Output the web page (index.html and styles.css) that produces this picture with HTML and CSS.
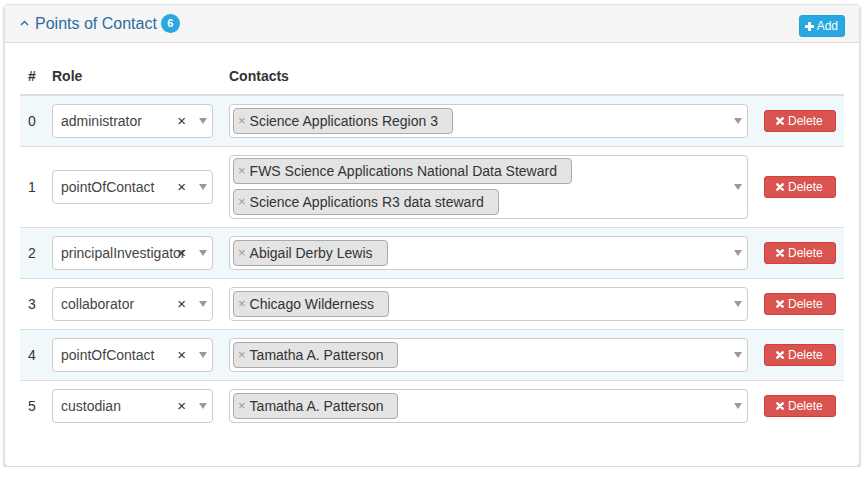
FILE: index.html
```html
<!DOCTYPE html>
<html>
<head>
<meta charset="utf-8">
<title>Points of Contact</title>
<link rel="stylesheet" href="styles.css">
</head>
<body>
<div class="panel">
  <div class="panel-heading">
    <div class="panel-title">
      <svg class="chev" width="9" height="6" viewBox="0 0 9 6"><polyline points="1,5 4.5,1.5 8,5" /></svg>
      <span class="title-text">Points of Contact</span>
      <span class="badge">6</span>
    </div>
    <button class="btn btn-add" type="button">
      <svg class="ico" width="9" height="9" viewBox="0 0 9 9"><rect x="3" y="0" width="3" height="9" rx="0.6"/><rect x="0" y="3" width="9" height="3" rx="0.6"/></svg>Add
    </button>
  </div>
  <div class="panel-body">
    <table class="poc-table">
      <colgroup>
        <col class="c-num"><col class="c-role"><col class="c-contacts"><col class="c-act">
      </colgroup>
      <thead>
        <tr><th>#</th><th>Role</th><th>Contacts</th><th></th></tr>
      </thead>
      <tbody>
        <tr>
          <td>0</td>
          <td><div class="sel"><span class="sel-text">administrator</span><span class="sel-clear">×</span><span class="caret"></span></div></td>
          <td><div class="multi"><div class="tags"><span class="tag"><span class="tag-x">×</span>Science Applications Region 3</span></div><span class="caret"></span></div></td>
          <td><button class="btn btn-del" type="button"><svg class="ico" width="8" height="8" viewBox="0 0 8 8"><path d="M1.3 1.3 L6.7 6.7 M6.7 1.3 L1.3 6.7"/></svg>Delete</button></td>
        </tr>
        <tr>
          <td>1</td>
          <td><div class="sel"><span class="sel-text">pointOfContact</span><span class="sel-clear">×</span><span class="caret"></span></div></td>
          <td><div class="multi"><div class="tags"><span class="tag"><span class="tag-x">×</span>FWS Science Applications National Data Steward</span><span class="tag"><span class="tag-x">×</span>Science Applications R3 data steward</span></div><span class="caret"></span></div></td>
          <td><button class="btn btn-del" type="button"><svg class="ico" width="8" height="8" viewBox="0 0 8 8"><path d="M1.3 1.3 L6.7 6.7 M6.7 1.3 L1.3 6.7"/></svg>Delete</button></td>
        </tr>
        <tr>
          <td>2</td>
          <td><div class="sel"><span class="sel-text">principalInvestigator</span><span class="sel-clear">×</span><span class="caret"></span></div></td>
          <td><div class="multi"><div class="tags"><span class="tag"><span class="tag-x">×</span>Abigail Derby Lewis</span></div><span class="caret"></span></div></td>
          <td><button class="btn btn-del" type="button"><svg class="ico" width="8" height="8" viewBox="0 0 8 8"><path d="M1.3 1.3 L6.7 6.7 M6.7 1.3 L1.3 6.7"/></svg>Delete</button></td>
        </tr>
        <tr>
          <td>3</td>
          <td><div class="sel"><span class="sel-text">collaborator</span><span class="sel-clear">×</span><span class="caret"></span></div></td>
          <td><div class="multi"><div class="tags"><span class="tag"><span class="tag-x">×</span>Chicago Wilderness</span></div><span class="caret"></span></div></td>
          <td><button class="btn btn-del" type="button"><svg class="ico" width="8" height="8" viewBox="0 0 8 8"><path d="M1.3 1.3 L6.7 6.7 M6.7 1.3 L1.3 6.7"/></svg>Delete</button></td>
        </tr>
        <tr>
          <td>4</td>
          <td><div class="sel"><span class="sel-text">pointOfContact</span><span class="sel-clear">×</span><span class="caret"></span></div></td>
          <td><div class="multi"><div class="tags"><span class="tag"><span class="tag-x">×</span>Tamatha A. Patterson</span></div><span class="caret"></span></div></td>
          <td><button class="btn btn-del" type="button"><svg class="ico" width="8" height="8" viewBox="0 0 8 8"><path d="M1.3 1.3 L6.7 6.7 M6.7 1.3 L1.3 6.7"/></svg>Delete</button></td>
        </tr>
        <tr>
          <td>5</td>
          <td><div class="sel"><span class="sel-text">custodian</span><span class="sel-clear">×</span><span class="caret"></span></div></td>
          <td><div class="multi"><div class="tags"><span class="tag"><span class="tag-x">×</span>Tamatha A. Patterson</span></div><span class="caret"></span></div></td>
          <td><button class="btn btn-del" type="button"><svg class="ico" width="8" height="8" viewBox="0 0 8 8"><path d="M1.3 1.3 L6.7 6.7 M6.7 1.3 L1.3 6.7"/></svg>Delete</button></td>
        </tr>
      </tbody>
    </table>
  </div>
</div>
</body>
</html>
```

FILE: styles.css
```css
* { box-sizing: border-box; }

html, body { background: #fff; }

body {
  margin: 0;
  padding: 4px 5px 0 4px;
  font-family: "Liberation Sans", Arial, sans-serif;
  font-size: 14px;
  line-height: 20px;
  color: #333;
}

.panel {
  border: 1px solid #ddd;
  border-radius: 4px;
  background: #fff;
  box-shadow: 0 2px 3px rgba(0, 0, 0, 0.25);
}

.panel-heading {
  height: 38px;
  padding: 0 14px 0 15px;
  background: #f5f5f5;
  border-bottom: 1px solid #ddd;
  border-radius: 3px 3px 0 0;
  display: flex;
  justify-content: space-between;
  align-items: flex-start;
}

.panel-title {
  display: flex;
  align-items: center;
  height: 37px;
  color: #2d6ca2;
  font-size: 16px;
}

.chev {
  fill: none;
  stroke: #2d6ca2;
  stroke-width: 1.4;
  margin-right: 6px;
  margin-top: -1px;
}

.badge {
  display: inline-flex;
  align-items: center;
  justify-content: center;
  width: 19px;
  height: 19px;
  margin-left: 4px;
  border-radius: 50%;
  background: #29a7df;
  color: #fff;
  font-size: 11px;
  font-weight: bold;
  line-height: 1;
}

.btn {
  display: inline-flex;
  align-items: center;
  height: 22px;
  border: 1px solid transparent;
  border-radius: 3px;
  font-family: "Liberation Sans", Arial, sans-serif;
  font-size: 12px;
  line-height: 18px;
  color: #fff;
  cursor: pointer;
}

.btn .ico { flex: none; }

.btn-add {
  margin-top: 10px;
  padding: 0 6px 0 5px;
  background: #29a7df;
  border-color: #24a0d7;
}

.btn-add .ico { fill: #fff; margin-right: 3px; }

.btn-del {
  padding: 0 12px 0 11px;
  background: #d9534f;
  border-color: #d43f3a;
}

.btn-del .ico {
  fill: none;
  stroke: #fff;
  stroke-width: 2.4;
  stroke-linecap: round;
  margin-right: 4px;
}

.panel-body {
  padding: 15px;
}

.poc-table {
  width: 100%;
  border-collapse: collapse;
  table-layout: fixed;
  margin-bottom: 20px;
}

.c-num { width: 24px; }
.c-role { width: 177px; }
.c-act { width: 88px; }

.poc-table th {
  text-align: left;
  font-weight: bold;
  padding: 8px;
  line-height: 20px;
  border-bottom: 2px solid #ddd;
}

.poc-table td {
  padding: 8px;
  vertical-align: middle;
  border-bottom: 1px solid #ddd;
}

.poc-table tbody tr:nth-child(odd) td { background: #f0f8fc; }

.poc-table tbody tr:last-child td { border-bottom: 0; }

.sel {
  display: flex;
  align-items: center;
  height: 34px;
  padding: 0 5px 0 8px;
  border: 1px solid #ccc;
  border-radius: 4px;
  background: #fff;
  color: #444;
}

.sel-text {
  flex: 1;
  min-width: 0;
  white-space: nowrap;
}

.sel-clear {
  flex: none;
  font-size: 15px;
  color: #333;
  margin-right: 13px;
}

.caret {
  flex: none;
  width: 0;
  height: 0;
  border-left: 4px solid transparent;
  border-right: 4px solid transparent;
  border-top: 6px solid #999;
}

.multi {
  display: flex;
  align-items: center;
  min-height: 34px;
  padding: 2px 5px 3px 3px;
  border: 1px solid #ccc;
  border-radius: 4px;
  background: #fff;
}

.tags {
  flex: 1;
  display: flex;
  flex-direction: column;
  align-items: flex-start;
  gap: 5px;
}

.tag {
  flex: none;
  display: inline-flex;
  align-items: center;
  height: 26px;
  padding: 0 14px 0 4px;
  border: 1px solid #aaa;
  border-radius: 4px;
  background: #e4e4e4;
  color: #333;
  white-space: nowrap;
}

.tag-x {
  color: #999;
  font-size: 13px;
  margin-right: 4px;
}
```
